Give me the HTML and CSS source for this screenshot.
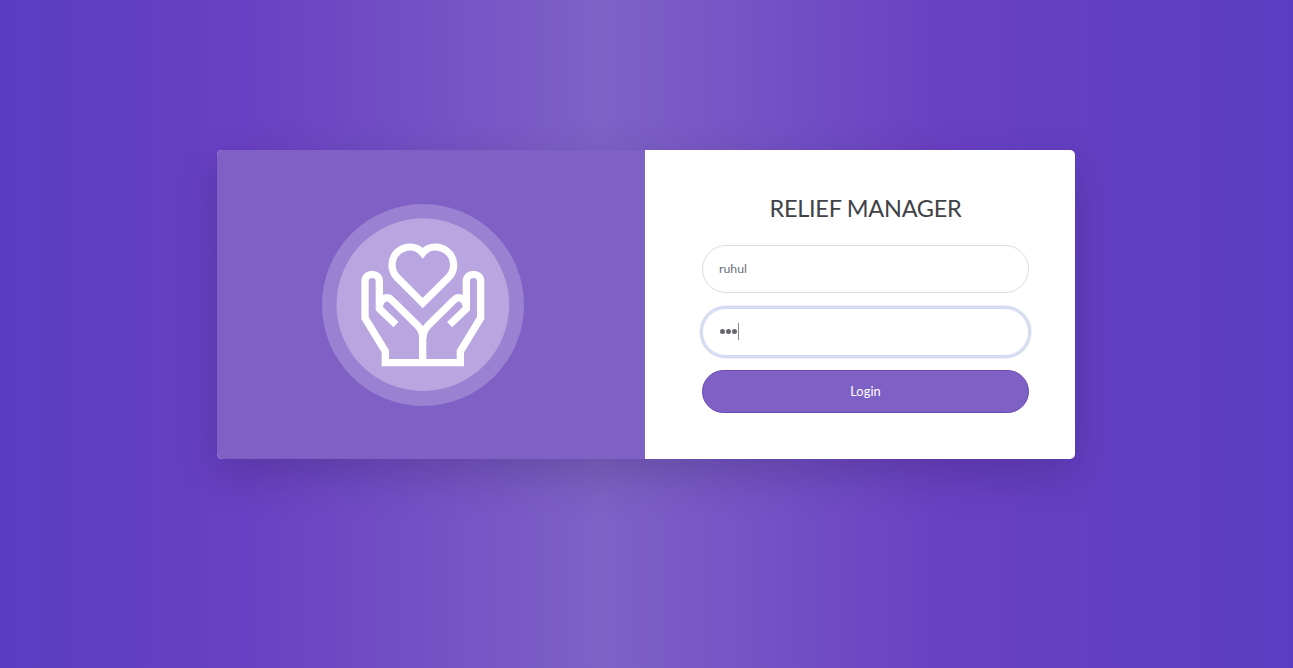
FILE: index.html
```html
<!DOCTYPE html>
<html lang="en">
<head>
<meta charset="utf-8">
<title>Relief Manager</title>
<link rel="stylesheet" href="styles.css">
</head>
<body class="page">
<main class="card">
  <section class="brand">
    <svg class="logo" viewBox="36 27 606 606" aria-hidden="true">
      <circle class="ring" cx="339" cy="330" r="303"/>
      <circle class="disc" cx="338.500" cy="329" r="259"/>
      <g class="lines">
        <path d="M338 324L262 248C250 236 246 224 246 210C247 158 310 139 338 174C366 139 430 158 431 210C431 224 427 236 415 248Z"/>
        <path d="M258 389L208 341V259C208 231 165 231 165 259V369L226 469V503H451V469L512 369V259C512 231 469 231 469 259V341L419 389"/>
        <path d="M209 329C213 310 232 302 245 315L323 392Q338 407 338 429V503M468 329C464 310 445 302 432 315L354 392Q339 407 339 429"/>
      </g>
    </svg>
  </section>
  <form class="login">
    <h1 class="title">RELIEF MANAGER</h1>
    <div class="field"><span class="value">ruhul</span></div>
    <div class="field focused"><span class="dot"></span><span class="dot"></span><span class="dot"></span><span class="caret"></span></div>
    <button class="submit" type="button"><span>Login</span></button>
  </form>
</main>
</body>
</html>
```
FILE: styles.css
```css
* { box-sizing: border-box; }

.page {
  margin: 0;
  height: 668px;
  padding: 150px 0 0 217px;
  overflow: hidden;
  font-family: Lato, "Open Sans", sans-serif;
  background: linear-gradient(90deg, #593ec1 0%, #6940c3 19%, #7e62c6 46.5%, #6940c3 73%, #5a3ec1 100%);
}

.card {
  display: flex;
  width: 858px;
  height: 308.500px;
  border-radius: 5px;
  overflow: hidden;
  background: #fff;
  box-shadow: 0 15px 44px rgba(0, 0, 0, .17);
}

.brand {
  width: 428px;
  padding: 54px 0 0 105px;
  background: #7f61c6;
}

.logo { display: block; width: 202px; height: 202px; }
.ring { fill: #9a81d1; }
.disc { fill: #b9a6e0; }
.lines { fill: none; stroke: #fff; stroke-width: 22; }

.login {
  display: flex;
  flex-direction: column;
  width: 430px;
  padding: 44px 46px 0 57px;
}

.title {
  margin: 0 0 22px;
  font-size: 23.500px;
  line-height: 29px;
  font-weight: 400;
  letter-spacing: -.28px;
  text-align: center;
  white-space: nowrap;
  color: #414247;
}

.field {
  display: flex;
  align-items: center;
  height: 48px;
  margin-bottom: 14.500px;
  padding: 0 16px 1px;
  border: 1px solid #dcdce6;
  border-radius: 24px;
  font-size: 12.300px;
  color: #6e707e;
}

.focused {
  border-color: #cfd8f0;
  box-shadow: 0 0 0 2.500px #d5dcf0;
  padding-bottom: 0;
}

.dot {
  flex: none;
  width: 5px;
  height: 5px;
  margin: 0 .7px;
  border-radius: 50%;
  background: #66666b;
}

.caret { width: 1px; height: 17px; background: #888; }

.submit {
  height: 43px;
  padding: 0 0 2px;
  border: 1px solid #6848b5;
  border-radius: 22px;
  background: #7f61c6;
  color: #fff;
  font: 400 12.800px Lato, "Open Sans", sans-serif;
  letter-spacing: .1px;
}
```
